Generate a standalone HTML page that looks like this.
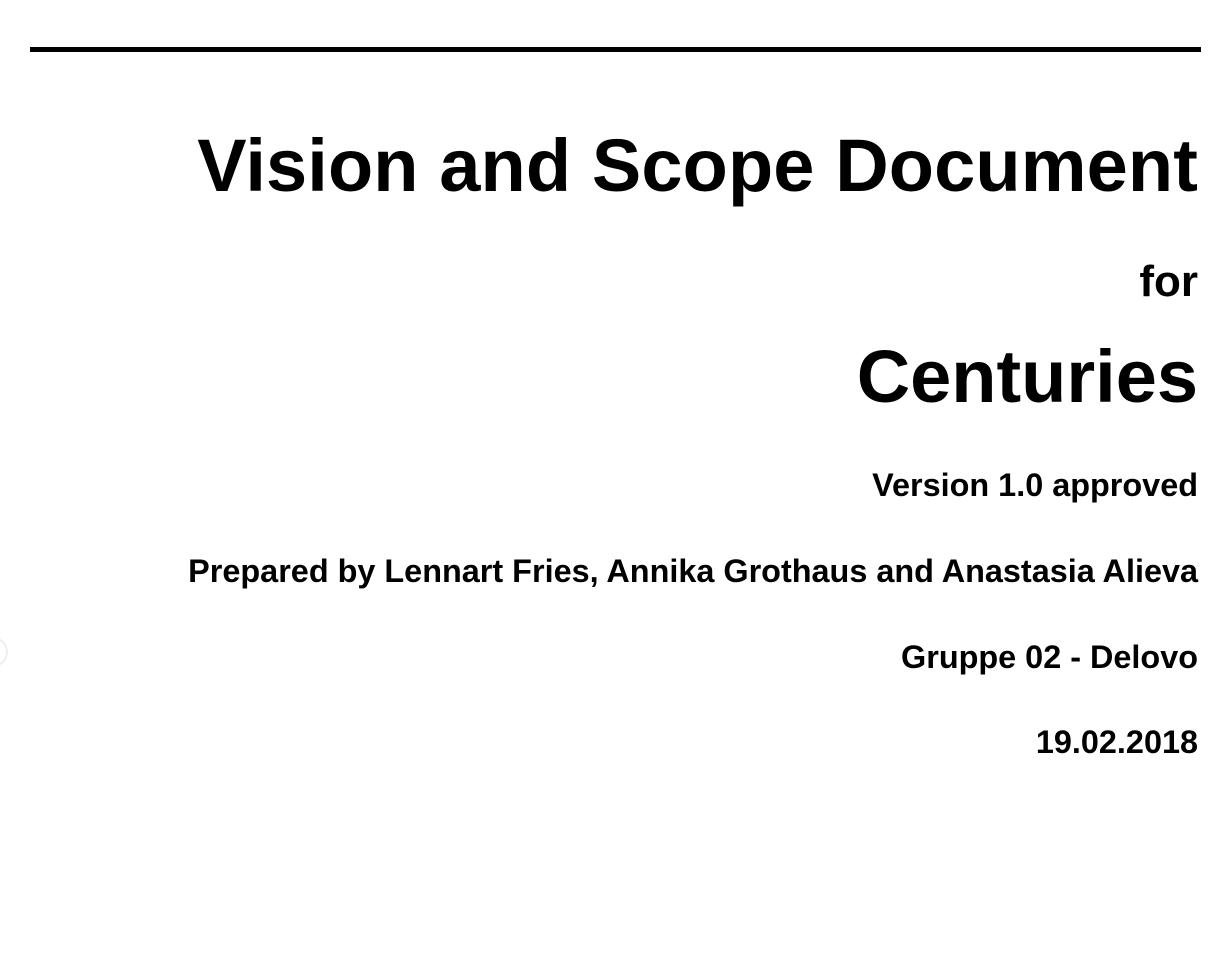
<!DOCTYPE html>
<html><head><meta charset="utf-8"><style>
html,body{margin:0;padding:0;background:#fff;width:1232px;height:965px;overflow:hidden;position:relative}
.t{position:absolute;right:34px;font-family:"Liberation Sans",Arial,sans-serif;font-weight:bold;line-height:1;white-space:nowrap;color:#000;text-align:right}
.line{position:absolute;left:30px;top:47px;width:1171px;height:5px;background:#000}
.circ{position:absolute;left:-22px;top:637px;width:26px;height:26px;border:2px solid #eee;border-radius:50%}
</style></head><body>
<div class="line"></div>
<div class="circ"></div>
<div class="t" style="top:129px;font-size:74px;letter-spacing:0.12px">Vision and Scope Document</div>
<div class="t" style="top:260px;font-size:44px">for</div>
<div class="t" style="top:340px;font-size:74px">Centuries</div>
<div class="t" style="top:469px;font-size:32.4px">Version 1.0 approved</div>
<div class="t" style="top:555px;font-size:32.4px">Prepared by Lennart Fries, Annika Grothaus and Anastasia Alieva</div>
<div class="t" style="top:641px;font-size:32.4px">Gruppe 02 - Delovo</div>
<div class="t" style="top:726px;font-size:32.4px">19.02.2018</div>
</body></html>
